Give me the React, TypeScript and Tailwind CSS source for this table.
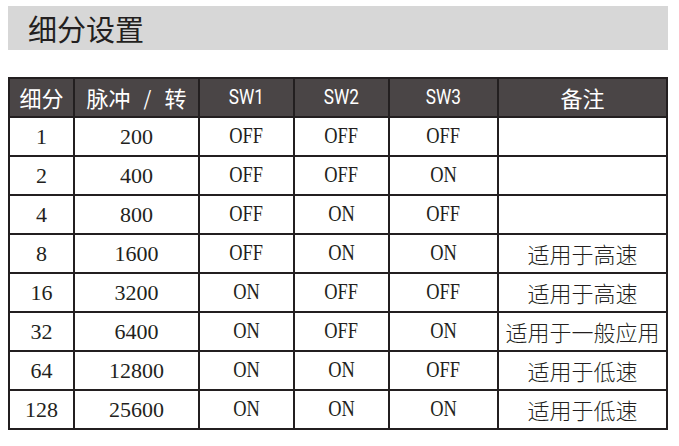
import React from "react";

const rows: [string, string, string, string, string, string][] = [
  ["1", "200", "OFF", "OFF", "OFF", ""],
  ["2", "400", "OFF", "OFF", "ON", ""],
  ["4", "800", "OFF", "ON", "OFF", ""],
  ["8", "1600", "OFF", "ON", "ON", "适用于高速"],
  ["16", "3200", "ON", "OFF", "OFF", "适用于高速"],
  ["32", "6400", "ON", "OFF", "ON", "适用于一般应用"],
  ["64", "12800", "ON", "ON", "OFF", "适用于低速"],
  ["128", "25600", "ON", "ON", "ON", "适用于低速"],
];

const head = "bg-[#4a4546] text-white flex items-center justify-center";
const cell = "bg-white flex items-center justify-center text-[#231f20]";

export default function App() {
  return (
    <div className="w-[679px] h-[446px] bg-white overflow-hidden font-['Noto_Sans_CJK_SC',sans-serif]">
      <div className="pt-[6px] pl-[8px]">
        <div className="w-[660px] h-[44px] bg-[#d7d7d7] flex items-center pl-[20px]">
          <span className="text-[29px] leading-none text-[#231f20]">细分设置</span>
        </div>
      </div>
      <div className="pt-[27px] pl-[8px]">
        <div className="w-[660px] bg-[#231f20] p-[2px] grid gap-[2px] grid-cols-[63px_123px_93px_93px_107px_1fr] auto-rows-[37px]">
          <div className={`${head} text-[22px]`}>细分</div>
          <div className={`${head} text-[22px] gap-[13px]`}>
            <span>脉冲</span>
            <span className="text-[20px]">/</span>
            <span>转</span>
          </div>
          {["SW1", "SW2", "SW3"].map((s) => (
            <div key={s} className={head}>
              <span className="text-[21px] inline-block scale-x-[0.82] font-['Roboto',sans-serif]">{s}</span>
            </div>
          ))}
          <div className={`${head} text-[22px]`}>备注</div>
          {rows.map((r, i) => (
            <React.Fragment key={i}>
              <div className={`${cell} text-[22px] font-['Liberation_Serif',serif]`}>{r[0]}</div>
              <div className={`${cell} text-[22px] font-['Liberation_Serif',serif]`}>{r[1]}</div>
              {[r[2], r[3], r[4]].map((v, j) => (
                <div key={j} className={cell}>
                  <span className="text-[23px] inline-block scale-x-[0.8] font-['Liberation_Serif',serif]">{v}</span>
                </div>
              ))}
              <div className={`${cell} text-[22px] font-light whitespace-nowrap`}>{r[5]}</div>
            </React.Fragment>
          ))}
        </div>
      </div>
    </div>
  );
}
